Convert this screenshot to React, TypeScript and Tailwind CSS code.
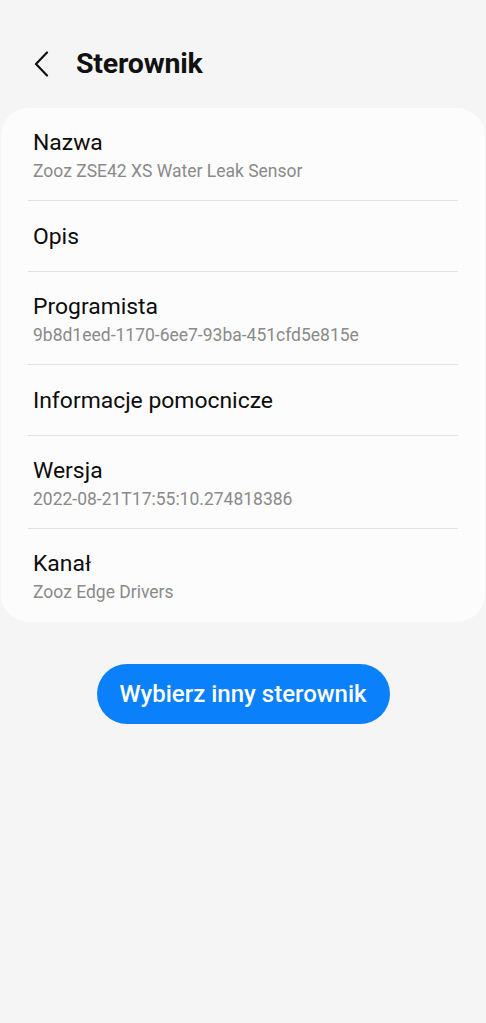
const rows = [
  { title: "Nazwa", sub: "Zooz ZSE42 XS Water Leak Sensor" },
  { title: "Opis" },
  { title: "Programista", sub: "9b8d1eed-1170-6ee7-93ba-451cfd5e815e" },
  { title: "Informacje pomocnicze" },
  { title: "Wersja", sub: "2022-08-21T17:55:10.274818386" },
  { title: "Kanał", sub: "Zooz Edge Drivers" },
];

export default function App() {
  return (
    <div className="min-h-[1023px] bg-[#f5f5f5] font-['Roboto',sans-serif]">
      {/* Header */}
      <div className="flex items-center h-[108px] pt-[20px]">
        <button className="w-[76px] h-[40px] flex items-center pl-[34px]">
          <svg width="16" height="26" viewBox="0 0 16 26" fill="none">
            <path d="M13 1.5 L2 13 L13 24.5" stroke="#111" strokeWidth="2.2" strokeLinecap="round" strokeLinejoin="round" />
          </svg>
        </button>
        <h1 className="text-[28.5px] font-bold text-[#111] tracking-[-0.2px]">Sterownik</h1>
      </div>

      {/* Info card */}
      <div className="mx-[1px] bg-[#fcfcfc] rounded-[28px] px-[27px]">
        {rows.map((row, i) => (
          <div
            key={row.title}
            className={`flex flex-col justify-center px-[5px] ${row.sub ? "h-[93px] pt-[2px]" : "h-[71px]"} ${i < rows.length - 1 ? "border-b border-[#e2e2e2]" : ""}`}
          >
            <div className="text-[22.9px] leading-[29px] text-[#0c0c0c]">{row.title}</div>
            {row.sub && <div className="text-[17.5px] leading-[23px] text-[#8a8a8a] mt-[3px]">{row.sub}</div>}
          </div>
        ))}
      </div>

      {/* Action */}
      <div className="flex justify-center mt-[42px]">
        <button className="h-[60px] w-[293px] rounded-full bg-[#0a81fb] text-white text-[24px] font-medium">
          Wybierz inny sterownik
        </button>
      </div>
    </div>
  );
}
